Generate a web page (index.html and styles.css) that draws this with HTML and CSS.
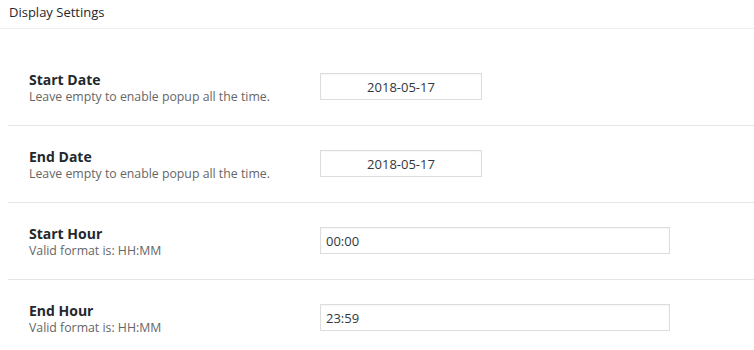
FILE: index.html
```html
<!DOCTYPE html>
<html lang="en">
<head>
    <meta charset="UTF-8">
    <title>Display Settings</title>
    <link rel="stylesheet" href="styles.css">
</head>
<body>
    <div class="panel">
        <h3 class="panel-title">Display Settings</h3>
        <div class="panel-body">
            <div class="setting-row">
                <div class="setting-label">
                    <label for="startDate">Start Date</label>
                    <p class="description">Leave empty to enable popup all the time.</p>
                </div>
                <div class="setting-field">
                    <input type="text" id="startDate" class="date-input" value="2018-05-17">
                </div>
            </div>
            <div class="setting-row">
                <div class="setting-label">
                    <label for="endDate">End Date</label>
                    <p class="description">Leave empty to enable popup all the time.</p>
                </div>
                <div class="setting-field">
                    <input type="text" id="endDate" class="date-input" value="2018-05-17">
                </div>
            </div>
            <div class="setting-row">
                <div class="setting-label">
                    <label for="startHour">Start Hour</label>
                    <p class="description">Valid format is: HH:MM</p>
                </div>
                <div class="setting-field">
                    <input type="text" id="startHour" class="hour-input" value="00:00">
                </div>
            </div>
            <div class="setting-row">
                <div class="setting-label">
                    <label for="endHour">End Hour</label>
                    <p class="description">Valid format is: HH:MM</p>
                </div>
                <div class="setting-field">
                    <input type="text" id="endHour" class="hour-input" value="23:59">
                </div>
            </div>
        </div>
    </div>
</body>
</html>
```

FILE: styles.css
```css
body {
    margin: 0;
    font-family: "Open Sans", "Noto Sans", Arial, sans-serif;
    background-color: #fff;
    color: #23282d;
}
.panel {
    background-color: #fff;
}
.panel-title {
    margin: 0;
    height: 28px;
    padding: 0 9px;
    font-size: 13px;
    font-weight: normal;
    line-height: 24px;
    color: #23282d;
    border-bottom: 1px solid #eee;
}
.panel-body {
    padding: 20px 0 0 8px;
}
.setting-row {
    display: flex;
    align-items: flex-start;
    height: 27px;
    padding: 24px 0 25px 21px;
    border-bottom: 1px solid #e5e5e5;
}
.setting-label {
    width: 291px;
    height: 27px;
}
.setting-label label {
    display: block;
    margin-top: -2px;
    font-size: 14px;
    font-weight: bold;
    line-height: 18px;
    color: #23282d;
}
.description {
    margin: 0;
    font-size: 12.3px;
    line-height: 16px;
    color: #666;
}
.setting-field {
    display: flex;
}
input[type="text"] {
    box-sizing: border-box;
    height: 27px;
    padding: 0 5px;
    border: 1px solid #ddd;
    border-radius: 0;
    font-family: inherit;
    font-size: 13px;
    color: #32373c;
    box-shadow: inset 0 1px 2px rgba(0,0,0,0.04);
    outline: none;
}
.date-input {
    width: 162px;
    text-align: center;
}
.hour-input {
    width: 350px;
}
```
